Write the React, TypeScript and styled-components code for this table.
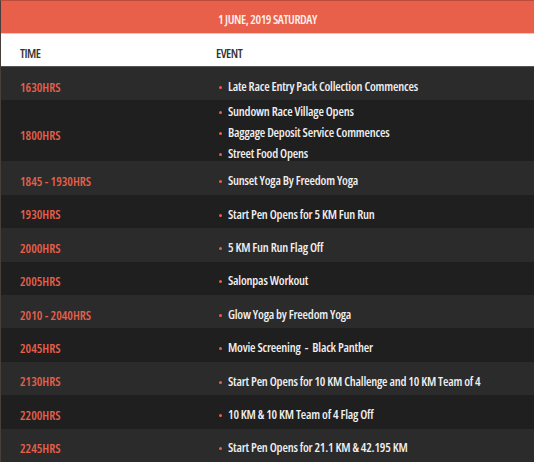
import React from "react";
import styled, { createGlobalStyle } from "styled-components";

const Global = createGlobalStyle`
  html, body { margin: 0; padding: 0; background: #2c2b2c; }
  body {
    font-family: "Open Sans", "DejaVu Sans Condensed", sans-serif;
    font-stretch: 75%;
    font-weight: 600;
  }
`;

const Table = styled.div`
  width: 534px;
  height: 462px;
  overflow: hidden;
  border-left: 1px solid #4a3e3c;
  border-top: 1px solid #b94e3c;
  box-sizing: border-box;
  white-space: nowrap;
`;

const TitleBar = styled.div`
  height: 33px;
  background: #e8604a;
  color: #fdf1ee;
  display: flex;
  align-items: center;
  justify-content: center;
  font-size: 12.5px;
  letter-spacing: -0.4px;
  padding-top: 5px;
  box-sizing: border-box;
  border-bottom: 1px solid #f3c4ba;
`;

const HeadRow = styled.div`
  height: 33px;
  background: #ffffff;
  color: #333333;
  display: grid;
  grid-template-columns: 197px 1fr;
  align-items: center;
  font-size: 12.5px;
  letter-spacing: -0.5px;
  padding-top: 6px;
  box-sizing: border-box;
  border-bottom: 1px solid #555555;
`;

const HeadCell = styled.div<{ $pad: number }>`
  padding-left: ${(p) => p.$pad}px;
`;

const Row = styled.div<{ $dark: boolean; $multi: boolean }>`
  height: ${(p) => (p.$multi ? 61 : 33.4)}px;
  background: ${(p) => (p.$dark ? "#201f20" : "#2c2b2c")};
  display: grid;
  grid-template-columns: 197px 1fr;
  align-items: center;
  font-size: 12.5px;
  padding-top: 7px;
  box-sizing: border-box;
`;

const Time = styled.div`
  color: #e8604a;
  font-weight: 600;
  padding-left: 19px;
`;

const Events = styled.ul<{ $multi: boolean }>`
  list-style: none;
  margin: ${(p) => (p.$multi ? "-5px 0 0" : "0")};
  align-self: ${(p) => (p.$multi ? "start" : "center")};
  padding: 0 0 0 20px;
  color: #f0f0f0;
  letter-spacing: -0.2px;
`;

const Item = styled.li`
  position: relative;
  padding-left: 10px;
  line-height: 20.7px;
  &::before {
    content: "";
    position: absolute;
    left: 1px;
    top: 9px;
    width: 3px;
    height: 3px;
    border-radius: 50%;
    background: #e8604a;
  }
`;

const rows: { time: string; events: string[] }[] = [
  { time: "1630HRS", events: ["Late Race Entry Pack Collection Commences"] },
  {
    time: "1800HRS",
    events: ["Sundown Race Village Opens", "Baggage Deposit Service Commences", "Street Food Opens"],
  },
  { time: "1845 - 1930HRS", events: ["Sunset Yoga By Freedom Yoga"] },
  { time: "1930HRS", events: ["Start Pen Opens for 5 KM Fun Run"] },
  { time: "2000HRS", events: ["5 KM Fun Run Flag Off"] },
  { time: "2005HRS", events: ["Salonpas Workout"] },
  { time: "2010 - 2040HRS", events: ["Glow Yoga by Freedom Yoga"] },
  { time: "2045HRS", events: ["Movie Screening\u00a0 -\u00a0 Black Panther"] },
  { time: "2130HRS", events: ["Start Pen Opens for 10 KM Challenge and 10 KM Team of 4"] },
  { time: "2200HRS", events: ["10 KM & 10 KM Team of 4 Flag Off"] },
  { time: "2245HRS", events: ["Start Pen Opens for 21.1 KM & 42.195 KM"] },
];

export default function App() {
  return (
    <>
      <Global />
      <Table>
        <TitleBar>1 JUNE, 2019 SATURDAY</TitleBar>
        <HeadRow>
          <HeadCell $pad={19}>TIME</HeadCell>
          <HeadCell $pad={18}>EVENT</HeadCell>
        </HeadRow>
        {rows.map((r, i) => {
          const multi = r.events.length > 1;
          return (
            <Row key={r.time} $dark={i % 2 === 1} $multi={multi}>
              <Time>{r.time}</Time>
              <Events $multi={multi}>
                {r.events.map((e) => (
                  <Item key={e}>{e}</Item>
                ))}
              </Events>
            </Row>
          );
        })}
      </Table>
    </>
  );
}
